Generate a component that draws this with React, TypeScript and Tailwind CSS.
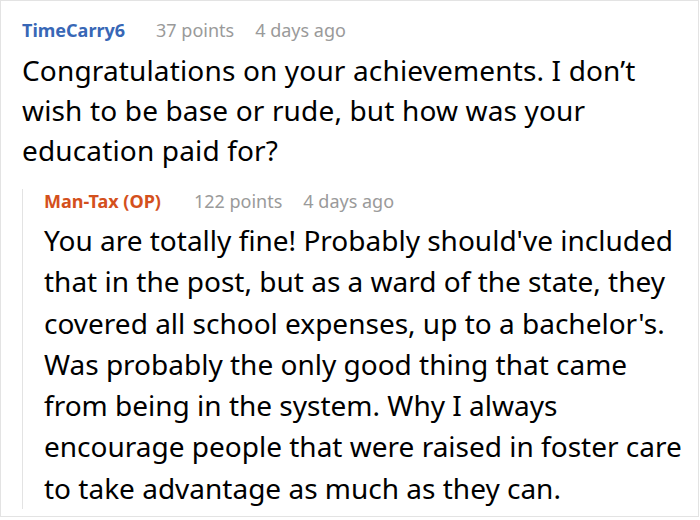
import React from 'react';

const font = { fontFamily: '"Noto Sans", "Open Sans", sans-serif' };

const Meta = ({ name, color, points, age, gap }: { name: string; color: string; points: string; age: string; gap: string }) => (
    <div className="flex items-baseline text-[18px] leading-[24px] whitespace-nowrap">
        <span className={`font-bold ${color}`}>{name}</span>
        <span className={`${gap} text-[#9a9a9a]`}>{points}</span>
        <span className="ml-[21px] text-[#9a9a9a]">{age}</span>
    </div>
);

const replyLines = [
    "You are totally fine! Probably should've included",
    "that in the post, but as a ward of the state, they",
    "covered all school expenses, up to a bachelor's.",
    "Was probably the only good thing that came",
    "from being in the system. Why I always",
    "encourage people that were raised in foster care",
    "to take advantage as much as they can.",
];

const App = () => {
    return (
        <div style={font} className="w-[700px] h-[520px] bg-white">
            <div className="h-[517px] w-[699px] border border-[#e3e3e3] pl-[21px] pt-[17px] text-black">
                <Meta name="TimeCarry6" color="text-[#3867b6]" points="37 points" age="4 days ago" gap="ml-[31px]" />
                <p className="mt-[8px] pr-[4px] text-[28px] leading-[40px] tracking-[0.15px]">
                    Congratulations on your achievements. I don’t wish to be base or rude, but how was your education paid for?
                </p>
                <div className="mt-[28px] border-l border-[#e3e3e3] pl-[21px]">
                    <div className="mt-[-9px]">
                        <Meta name="Man-Tax (OP)" color="text-[#d4501c]" points="122 points" age="4 days ago" gap="ml-[33px]" />
                    </div>
                    <p className="mt-[7px] mb-[-7px] text-[28px] leading-[41.3px] whitespace-nowrap">
                        {replyLines.map((line, i) => (
                            <span key={i} className="block">{line}</span>
                        ))}
                    </p>
                </div>
            </div>
        </div>
    );
};

export default App;
